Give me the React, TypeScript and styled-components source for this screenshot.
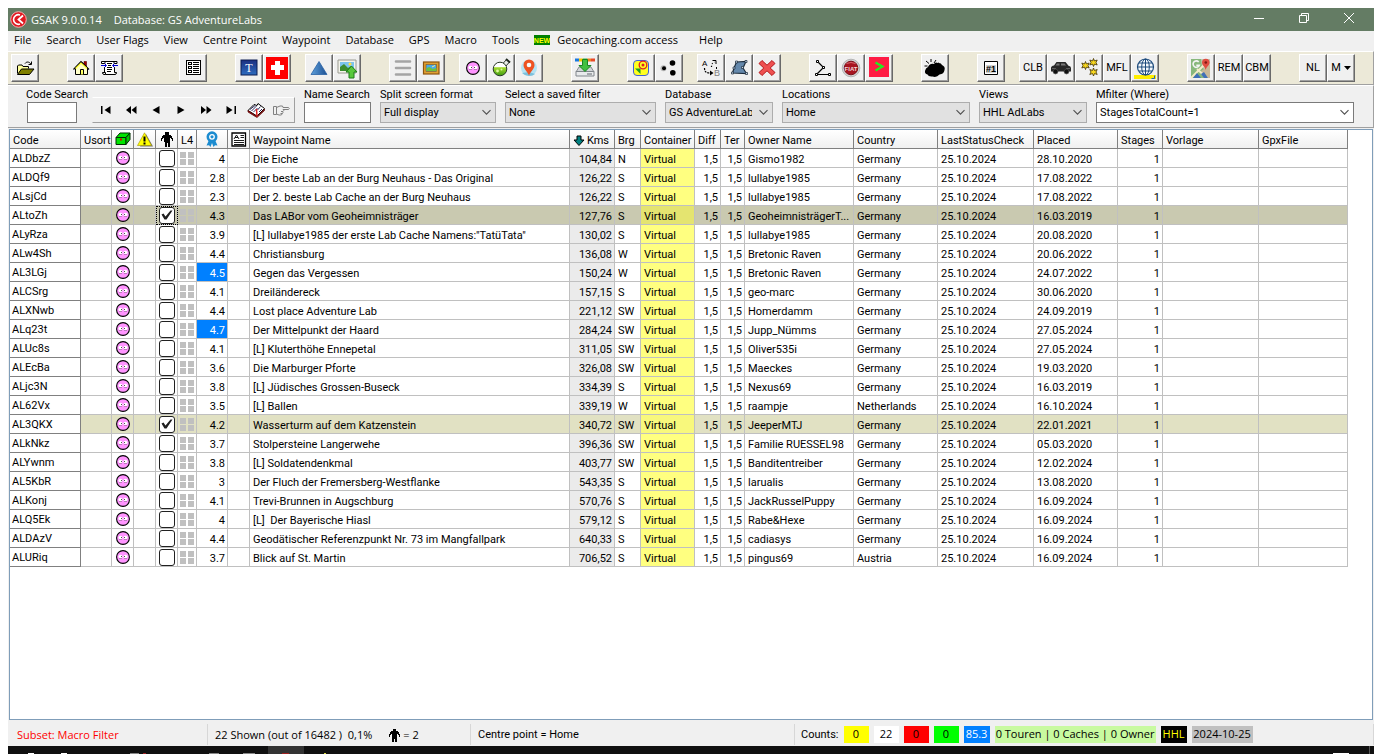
import React from 'react';
import styled, { createGlobalStyle, css } from 'styled-components';

const ui = '"Open Sans", "Noto Sans", sans-serif';
const grid = '"Roboto", "Liberation Sans", sans-serif';

const GlobalStyle = createGlobalStyle`
  * { box-sizing: border-box; }
  body { margin: 0; background: #fff; color: #000; font: 11px/16px ${ui}; }
  button, input, select { font: inherit; color: inherit; margin: 0; }
`;

const Page = styled.div`
  min-height: 100vh;
  padding: 8px 8px 0;
  display: flex;
  flex-direction: column;
`;

const Frame = styled.div`
  flex: 1;
  display: flex;
  flex-direction: column;
  min-width: 0;
  background: #f0f0f0;
`;

/* ---------- title bar and menu ---------- */

const TitleBar = styled.header`
  display: flex;
  align-items: center;
  height: 23px;
  padding-left: 2px;
  background: #647c64;
  color: #fff;
`;

const Title = styled.h1`
  margin: 0 0 0 4px;
  flex: 1;
  display: flex;
  gap: 12px;
  font-size: 11px;
  font-weight: 400;
`;

const CaptionButton = styled.button`
  width: 45px;
  height: 23px;
  padding: 0 0 4px;
  border: 0;
  background: none;
  display: grid;
  place-items: center;
  &:last-child { margin-right: 3px; }
`;

const MenuBar = styled.nav`
  display: flex;
  align-items: center;
  gap: 15px;
  height: 20px;
  padding: 0 6px 2px;
`;

const MenuItem = styled.button<{ $spaced?: boolean }>`
  display: flex;
  align-items: center;
  gap: 7px;
  padding: 0;
  margin-left: ${(p) => (p.$spaced ? '6px' : '0')};
  border: 0;
  background: none;
  white-space: nowrap;
`;

/* ---------- toolbar ---------- */

const Toolbar = styled.div`
  display: flex;
  padding: 2px 3px;
  background: #ece9d8;
  border-top: 1px solid #fff;
  border-bottom: 1px solid #a0a0a0;
  border-right: 1px solid #a0a0a0;
`;

const ToolGroup = styled.div<{ $gap: number }>`
  display: flex;
  margin-left: ${(p) => p.$gap}px;
`;

const ToolButton = styled.button`
  width: 28px;
  height: 28px;
  padding: 0;
  display: grid;
  place-items: center;
  background: #f0f0f0;
  border: 1px solid;
  border-color: #fff #696969 #696969 #fff;
  box-shadow: inset -1px -1px #a0a0a0;
  font: 11px/24px ${grid};
`;

/* ---------- filter panel ---------- */

const FilterPanel = styled.form`
  display: flex;
  align-items: flex-start;
  gap: 9px;
  padding: 2px 19px 4px 18px;
  border-top: 1px solid #fff;
  border-bottom: 1px solid #a0a0a0;
  border-right: 1px solid #a0a0a0;
  font: 11px/14px ${grid};
`;

const Field = styled.div<{ $width?: number }>`
  ${(p) => (p.$width ? css`flex: 0 0 ${p.$width}px;` : css`flex: 1;`)}
  min-width: 0;
  display: flex;
  flex-direction: column;
`;

const Label = styled.label`
  white-space: nowrap;
`;

const TextBox = styled.input<{ $narrow?: boolean }>`
  width: ${(p) => (p.$narrow ? '50px' : '100%')};
  height: 21px;
  margin-left: ${(p) => (p.$narrow ? '1px' : '0')};
  padding: 0 3px;
  border: 1px solid #7a7a7a;
  background: #fff;
`;

const ComboBox = styled.div`
  position: relative;
  svg {
    position: absolute;
    right: 4px;
    top: 7px;
    pointer-events: none;
  }
`;

const Select = styled.select`
  appearance: none;
  display: block;
  width: 100%;
  height: 21px;
  padding: 1px 20px 0 3px;
  border: 1px solid #adadad;
  border-radius: 0;
  background: #e1e1e1;
`;

const Navigator = styled.div`
  flex: 0 0 203px;
  display: flex;
  height: 26px;
  margin-top: 9px;
  border: 1px solid;
  border-color: #fff #a0a0a0 #a0a0a0 #f0f0f0;
`;

const NavButton = styled.button`
  width: 25px;
  padding: 0;
  border: 0;
  background: none;
  display: grid;
  place-items: center;
`;

/* ---------- grid ---------- */

const GridPane = styled.main`
  flex: 1;
  margin: 1px 1px 0;
  border: 1px solid #7f9db9;
  background: #fff;
  overflow: hidden;
`;

const Table = styled.table`
  width: 1338px;
  table-layout: fixed;
  border-collapse: separate;
  border-spacing: 0;
  font: 11px/14px ${grid};
`;

const HeadCell = styled.th<{ $icon?: boolean }>`
  height: 19px;
  padding: ${(p) => (p.$icon ? '0 3px' : '4px 3px 0')};
  border-right: 1px solid #808080;
  border-bottom: 1px solid #808080;
  background: linear-gradient(#fff, #f0f0f0);
  font-weight: 400;
  text-align: left;
  white-space: nowrap;
  svg { display: block; margin: auto; }
`;

const SortHead = styled.span`
  display: flex;
  align-items: center;
  justify-content: space-between;
  padding-right: 2px;
  svg { margin: 0; }
`;

const Cell = styled.td<{ $align?: string }>`
  height: 19px;
  padding: 4px 2px 0 3px;
  border-right: 1px solid #c0c0c0;
  border-bottom: 1px solid #c0c0c0;
  text-align: ${(p) => p.$align ?? 'left'};
  white-space: pre;
  overflow: hidden;
  text-overflow: ellipsis;
`;

const CodeCell = styled(Cell)`
  padding: 3px 2px 1px;
  background: #fff;
  border-color: #808080;
`;

const IconCell = styled(Cell)<{ $focused?: boolean }>`
  padding: 0;
  outline: ${(p) => (p.$focused ? '1px dotted #000' : 'none')};
  outline-offset: -1px;
  svg { display: block; margin: auto; }
`;

const RatingCell = styled(Cell)<{ $top: boolean }>`
  ${(p) => p.$top && css`background: #0080ff; color: #fff;`}
`;

const KmsCell = styled(Cell)<{ $plain: boolean }>`
  background: ${(p) => (p.$plain ? '#ebebeb' : 'transparent')};
`;

const tones = {
  none: { row: '#fff', box: '#ffff80' },
  current: { row: '#c9c9b0', box: '#e4e470' },
  flagged: { row: '#e1e1c3', box: '#f8f87c' },
};

const Row = styled.tr<{ $tone: keyof typeof tones }>`
  background: ${(p) => tones[p.$tone].row};
  ${Cell}.box { background: ${(p) => tones[p.$tone].box}; }
`;

const CheckBox = styled.input`
  appearance: none;
  display: block;
  width: 16px;
  height: 17px;
  margin: 0 auto;
  border: 1px solid #202020;
  border-radius: 3px;
  background: #fff;
  &:checked::before {
    content: '';
    display: block;
    width: 14px;
    height: 15px;
    background: #202020;
    clip-path: polygon(2px 7px, 4px 6px, 6px 9px, 11px 3px, 13px 3px, 7px 12px, 5px 12px);
  }
`;

/* ---------- status bar ---------- */

const StatusBar = styled.footer`
  display: flex;
  height: 26px;
`;

const Panel = styled.div<{ $width?: number }>`
  ${(p) => (p.$width ? css`flex: 0 0 ${p.$width}px;` : css`flex: 1;`)}
  display: flex;
  align-items: center;
  margin: 4px 0 1px;
  padding: 1px 6px 0 7px;
  border-right: 1px solid #d7d7d7;
  white-space: pre;
`;

const FilterName = styled(Panel)`
  padding-left: 9px;
  color: #f00;
`;

const Small = styled.span`
  font: 11px/16px ${grid};
`;

const Counts = styled(Panel)`
  padding: 0 6px;
  gap: 5px;
`;

const Count = styled.span<{ $bg: string; $fg?: string; $width: number }>`
  width: ${(p) => p.$width}px;
  height: 17px;
  line-height: 16px;
  text-align: center;
  background: ${(p) => p.$bg};
  color: ${(p) => p.$fg ?? '#000'};
`;

const TaskStrip = styled.div`
  display: flex;
  justify-content: space-between;
  height: 8px;
  background: #101010;
`;

/* ---------- drawings ---------- */

const Icon = ({ children, crisp, w = 24, h = 24 }: { children: React.ReactNode; crisp?: boolean; w?: number; h?: number }) => (
  <svg width={w} height={h} viewBox={`0 0 ${w} ${h}`} fill="none" shapeRendering={crisp ? 'crispEdges' : 'auto'} aria-hidden="true">
    {children}
  </svg>
);

const FaceShape = () => (
  <>
    <circle cx="7" cy="7" r="6.400" fill="#ff94ff" stroke="#000" strokeWidth="1.100" />
    <ellipse cx="4.500" cy="6.500" rx="2" ry="1.700" fill="#fff" />
    <ellipse cx="9.500" cy="6.500" rx="2" ry="1.700" fill="#fff" />
    <path d="M3 8.500h3M8 8.500h3" stroke="#a070a0" strokeWidth=".7" />
    <path d="M5 6h1v1h-1zM8 6h1v1h-1z" fill="#505050" />
  </>
);

const Face = () => <Icon w={14} h={14}><FaceShape /></Icon>;

const Person = ({ w = 12, h = 15 }: { w?: number; h?: number }) => (
  <svg width={w} height={h} viewBox="0 0 12 15" fill="#000" shapeRendering="crispEdges" aria-hidden="true">
    <path d="M4 0h4v3h-4zM2 3h8v1h1v2h1v3h-1v-2h-1v-1h-1v4h-.5v5h-2v-4h-1v4h-2v-5H3V6H2v1H1v2H0V6h1V4h1z" />
  </svg>
);

const Chevron = () => (
  <svg width="11" height="7" viewBox="0 0 11 7" fill="none" aria-hidden="true">
    <path d="M1.500 1.200l4 4 4-4" stroke="#505050" strokeWidth="1.100" />
  </svg>
);

const icons: Record<string, React.ReactNode> = {
  open: (
    <Icon>
      <path d="M4.500 17.500v-7.500l1-1h3.500l1 1.500h5.500v2" fill="#ffff9c" stroke="#000" />
      <path d="M4.500 18.500l4-5.500h12.500l-4.500 5.500z" fill="#808000" stroke="#000" />
      <path d="M12 7.500c1.500-2 4-2 6 .5M18.500 5.500v3h-3" stroke="#000" />
    </Icon>
  ),
  home: (
    <Icon>
      <path d="M15 5.500h2.500v6h-2.500z" fill="#a00000" stroke="#500" strokeWidth=".6" />
      <path d="M6.500 12v6.500h12v-6.500l-6-6z" fill="#ffffc8" stroke="#000" />
      <path d="M4.500 13.500l7.500-8 8 8" stroke="#000" strokeWidth="1.200" />
      <path d="M6.500 12.500l5.500-5.500 6 5.500" stroke="#ffff30" strokeWidth="1.200" />
      <path d="M11.500 18.500v-5h3v5" fill="#ffff60" stroke="#000" />
    </Icon>
  ),
  scroll: (
    <Icon>
      <path d="M7.500 5.500h10v13h-10z" fill="#fff" />
      <path d="M8 5.500h9M7.500 11v5.500M17.500 11v5.500M5.500 16.500h3v2h-1.500q-1.500 0-1.500-2zM8.500 18.500h9.500q1.500 0 1.500-2h-2" stroke="#000" />
      <path d="M4.500 5.500h3.500v2h-3.500zM17 5.500h3v2h-3z" fill="#fff" stroke="#000" />
      <path d="M10 7.500h5M11 9.500h3M10 11.500h5M10 13.500h5M10 15.500h4" stroke="#000" />
      <path d="M4 9.500h5M7.500 7.500l2 2-2 2M21 9.500h-5M17.500 7.500l-2 2 2 2" stroke="#0000d0" />
    </Icon>
  ),
  list: (
    <Icon crisp>
      <path d="M5.500 4.500h14v14h-14z" fill="#fff" stroke="#000" />
      <path d="M7.500 6.500h3v2h-3zM7.500 10.500h3v2h-3zM7.500 14.500h3v2h-3z" fill="#fff" stroke="#000" />
      <path d="M12 6.500h6M12 8.500h6M12 10.500h6M12 12.500h6M12 14.500h6M12 16.500h6" stroke="#000" />
    </Icon>
  ),
  tee: (
    <Icon>
      <defs><linearGradient id="tee" x2="0" y2="1"><stop stopColor="#1c2f80" /><stop offset="1" stopColor="#2d6cc0" /></linearGradient></defs>
      <rect x="4" y="4" width="16" height="15" fill="url(#tee)" stroke="#0c1c50" />
      <text x="12" y="16" fill="#fff" fontSize="12" fontFamily="Liberation Serif, serif" textAnchor="middle">T</text>
    </Icon>
  ),
  swiss: (
    <Icon crisp>
      <path d="M1 1h22v22h-22z" fill="#f00" />
      <path d="M10 5h5v4h4v5h-4v5h-5v-5h-4v-5h4z" fill="#fff" />
    </Icon>
  ),
  triangle: (
    <Icon>
      <defs><linearGradient id="tri" x2="1"><stop stopColor="#5da0dc" /><stop offset="1" stopColor="#1c4f92" /></linearGradient></defs>
      <path d="M12 5.500l8 13h-16z" fill="url(#tri)" stroke="#2a62a4" strokeWidth=".8" />
    </Icon>
  ),
  photo: (
    <Icon>
      <path d="M3 4h18v13h-18z" fill="#f4f4ec" stroke="#9a9a90" />
      <path d="M5 6h14v9h-14z" fill="#7cc4ee" />
      <path d="M5 15v-4l4-3 4 4 3-2 3 3v2z" fill="#3c8c30" />
      <circle cx="15" cy="8" r="1.500" fill="#ffe040" />
      <path d="M16.500 10l5.500 6h-3v6h-5v-6h-3z" fill="#58c83c" stroke="#1e7c18" />
    </Icon>
  ),
  bars: (
    <Icon>
      <path d="M5 5.500h14M5 12h14M5 18.500h14" stroke="#a4a4a4" strokeWidth="2.600" strokeLinecap="round" />
    </Icon>
  ),
  frame: (
    <Icon>
      <rect x="4.500" y="6" width="15.500" height="12" fill="#e0a030" stroke="#8c5410" strokeWidth="1.200" />
      <rect x="7" y="8.500" width="10.500" height="7" fill="#48a8e8" stroke="#8c5410" strokeWidth=".6" />
      <path d="M7.500 15v-3l3-1 3 2 4-1v3z" fill="#6cc040" />
      <path d="M13 11l3-1.500" stroke="#fff080" />
    </Icon>
  ),
  face: <Icon><g transform="translate(5 5)"><FaceShape /></g></Icon>,
  flask: (
    <Icon>
      <defs><linearGradient id="flask" x2="0" y2="1"><stop stopColor="#fff" /><stop offset=".35" stopColor="#fff" /><stop offset=".4" stopColor="#a4dc30" /><stop offset="1" stopColor="#3c9810" /></linearGradient></defs>
      <path d="M13.500 8l4-4.500 3 2.500-4 4.500z" fill="#e8ece8" stroke="#303830" />
      <path d="M17 3l4 3.500" stroke="#202820" strokeWidth="2" />
      <circle cx="11" cy="13" r="6.800" fill="url(#flask)" stroke="#283828" />
      <circle cx="8.500" cy="15" r="1.400" fill="#e0f8a0" /><circle cx="12.500" cy="13.500" r="1" fill="#e0f8a0" />
    </Icon>
  ),
  pin: (
    <Icon>
      <circle cx="12" cy="12" r="8" fill="#b4e2f4" />
      <path d="M5 17q3 3 7 3t6-2l-6-2z" fill="#7cc0dc" />
      <path d="M12 19.500c-1.500-4-5.500-6.500-5.500-10.500a5.500 5.500 0 0 1 11 0c0 4-4 6.500-5.500 10.500z" fill="#ee5222" />
      <circle cx="12" cy="9" r="2.300" fill="#f8f8f8" />
    </Icon>
  ),
  drive: (
    <Icon>
      <path d="M2 2.500h4v3h-4z" fill="#1878e0" /><path d="M6 2.500h4v3h-4z" fill="#f4c800" />
      <path d="M10 2.500h4v3h-4z" fill="#28b848" /><path d="M14 2.500h4v3h-4z" fill="#f08020" /><path d="M18 2.500h4v3h-4z" fill="#e84828" />
      <path d="M6 11h12l3 5h-18z" fill="#d0d4d8" stroke="#888c90" />
      <path d="M3 15.500h18v4.500h-18z" fill="#e8eaec" stroke="#80868c" />
      <path d="M14 18h5" stroke="#60666c" />
      <path d="M9.500 3.500h5v6h3.500l-6 6-6-6h3.500z" fill="#40c040" stroke="#188420" />
    </Icon>
  ),
  target: (
    <Icon>
      <rect x="4.500" y="4.500" width="15" height="15" rx="3.500" fill="#ffff20" stroke="#4060d8" />
      <circle cx="14" cy="9" r="3.800" fill="#ffff20" stroke="#e02020" strokeWidth="1.300" />
      <circle cx="14" cy="9" r="1.500" fill="#e02020" />
      <path d="M6 12.500h5.500v5.500z" fill="#20a020" />
    </Icon>
  ),
  dots: (
    <Icon>
      <circle cx="6.500" cy="12.300" r="3" fill="#b8b8b8" />
      <circle cx="15.500" cy="7" r="2.800" fill="#000" /><circle cx="7" cy="12.300" r="2" fill="#000" /><circle cx="15.800" cy="16.700" r="2.800" fill="#000" />
    </Icon>
  ),
  route: (
    <Icon>
      <text x="3" y="10" fill="#000" fontSize="8" fontFamily="Liberation Sans, sans-serif">A</text>
      <text x="15" y="20" fill="#808080" fontSize="9" fontFamily="Liberation Sans, sans-serif">B</text>
      <path d="M5.500 12c0 4 2 5 5.500 5" stroke="#000" strokeDasharray="2 1" strokeWidth="1.200" /><path d="M11 14.500l3.500 2.500-3.500 2.500z" fill="#000" />
      <path d="M12.500 11c0-3 1-4 3-5" stroke="#000" strokeDasharray="1 2" strokeWidth="1.200" /><path d="M13.500 4.500h3.500v3.500M17.500 11v2" stroke="#000" />
    </Icon>
  ),
  polygon: (
    <Icon>
      <path d="M9.500 6l9.500-.5-3 6.500 3.500 5.500-14-.5 1.500-5z" fill="#6488ac" stroke="#1c2c3c" strokeWidth="1.200" />
      <path d="M8.500 5h2v2h-2zM18 4.500h2v2h-2zM14.500 10.500h2v2h-2zM18.500 16.500h2v2h-2zM4.500 16h2v2h-2zM6 11h2v2h-2z" fill="#c8d8e8" stroke="#1c2c3c" strokeWidth=".7" />
    </Icon>
  ),
  cross: (
    <Icon>
      <path d="M7 4.500l5 4.700 5-4.700 3 3-4.800 4.500 4.800 4.500-3 3-5-4.700-5 4.700-3-3 4.800-4.500-4.800-4.500z" fill="#ee5050" stroke="#b41418" strokeLinejoin="round" />
    </Icon>
  ),
  track: (
    <Icon>
      <path d="M6.500 5.500l6 6-7 7h13" stroke="#000" strokeWidth="1.200" />
      <path d="M5.500 4.500h2v2h-2zM11.500 10.500h2v2h-2zM4.500 17.500h2v2h-2zM17.500 17.500h2v2h-2z" fill="#fff" stroke="#000" />
    </Icon>
  ),
  fiat: (
    <Icon>
      <circle cx="12" cy="12" r="8.800" fill="#d4d4d4" stroke="#b4b4b4" />
      <circle cx="12" cy="12" r="6.800" fill="#a81420" stroke="#78101a" />
      <path d="M7.500 7.500q4.500-2 9 0" stroke="#d86870" />
      <text x="12" y="14.500" fill="#f0d8d8" fontSize="6" fontWeight="700" fontFamily="Liberation Sans, sans-serif" textAnchor="middle">FIAT</text>
    </Icon>
  ),
  prompt: (
    <Icon>
      <path d="M2 1h20v20h-20z" fill="#ff1c44" />
      <path d="M8.500 6.500l7 4-7 4" stroke="#20f020" strokeWidth="2.200" />
    </Icon>
  ),
  weather: (
    <Icon>
      <path d="M8 3v3M3 5l3 2.500M1.500 10h3M13 4l-2 3M16 7l-3 1" stroke="#000" />
      <path d="M5 11q2-4 6-3 1-2.500 4-1 3-.5 4 2 3.500 1.500 2.500 5-.5 4-5 4.500-3 3.500-7 2-4 .5-5-2-3-1-2.500-3.500.500-3 3-4z" fill="#000" />
    </Icon>
  ),
  number: (
    <Icon>
      <path d="M5.500 5.500h13v13h-13z" fill="#fff" stroke="#000" /><path d="M7 9h10v8h-10z" fill="#d0d0d0" />
      <text x="12" y="16" fill="#000" fontSize="9" fontWeight="700" fontFamily="Liberation Sans, sans-serif" textAnchor="middle">#1</text>
    </Icon>
  ),
  car: (
    <Icon>
      <path d="M2 12q0-2 3-2.500l2.500-3.500h9l3 3.700q2.500.3 2.500 2.300v3.500h-20z" fill="#282828" />
      <path d="M8 7.500h2.500v2h-4zM12 7.500h3.500l1.500 2h-5z" fill="#787878" />
      <path d="M3 12.500h4M17 12.500h4" stroke="#606060" />
      <circle cx="6.500" cy="15.500" r="2.400" fill="#101010" stroke="#484848" strokeWidth=".8" /><circle cx="17.500" cy="15.500" r="2.400" fill="#101010" stroke="#484848" strokeWidth=".8" />
    </Icon>
  ),
  stars: (
    <Icon>
      {[[8.500, 9.500], [16.500, 6.500], [16.500, 16]].map(([x, y]) => (
        <path key={`${x}${y}`} transform={`translate(${x} ${y})`} d="M0-4l1 2.500 2.700-1-1.200 2.500 1.200 2.500-2.700-1-1 2.500-1-2.500-2.700 1 1.200-2.500-1.200-2.500 2.700 1z" fill="#f8d820" stroke="#403000" strokeWidth=".8" />
      ))}
    </Icon>
  ),
  globe: (
    <Icon>
      <path d="M1 19h22v4h-22z" fill="#ffee00" /><path d="M18.500 22.500h3v-3" stroke="#2060c0" />
      <circle cx="12.500" cy="11" r="8" fill="#f4f8fc" stroke="#1c4a7c" strokeWidth="1.200" />
      <ellipse cx="12.500" cy="11" rx="3.800" ry="8" stroke="#1c4a7c" />
      <path d="M12.500 3v16M4.500 11h16M6 7h13M6 15h13" stroke="#1c4a7c" />
    </Icon>
  ),
  maps: (
    <Icon>
      <path d="M2 3h19v19h-19z" fill="#88b87c" />
      <path d="M12 3h9v16l-8-8z" fill="#c4c8b4" />
      <path d="M21 9v13h-5l-4-7z" fill="#c8b898" />
      <path d="M2 22l17-17M8 13l10 9" stroke="#f4ecc8" strokeWidth="2" />
      <path d="M4 22l4-5 4 5zM15 22l-3-4 3-2 4 6z" fill="#4070b8" />
      <path d="M9.700 6a3.200 3.200 0 1 0 .6 3.200h-3" stroke="#f4f4f4" strokeWidth="1.600" />
      <path d="M16.500 14c0-3-3.500-4.500-3.500-7.500a3.800 3.800 0 0 1 7.600 0c0 3-3.500 4.500-4.100 7.500z" fill="#e04c40" /><circle cx="16.800" cy="6.500" r="1.300" fill="#801810" />
    </Icon>
  ),
};

/* Tools with a gap in front, in button order; an entry without an icon is a caption button. */
const tools: { gap: number; items: [string, string][] }[] = [
  { gap: 0, items: [['Open', 'open']] },
  { gap: 28, items: [['Home', 'home'], ['Notes', 'scroll']] },
  { gap: 56, items: [['List', 'list']] },
  { gap: 28, items: [['T', 'tee'], ['Swiss', 'swiss']] },
  { gap: 14, items: [['Triangle', 'triangle'], ['Images', 'photo']] },
  { gap: 28, items: [['Lines', 'bars'], ['Picture', 'frame']] },
  { gap: 14, items: [['Labs', 'face'], ['Flask', 'flask'], ['Location', 'pin']] },
  { gap: 28, items: [['Download', 'drive']] },
  { gap: 28, items: [['Target', 'target'], ['Share', 'dots']] },
  { gap: 14, items: [['Route', 'route'], ['Polygon', 'polygon'], ['Delete', 'cross']] },
  { gap: 28, items: [['Track', 'track'], ['Fiat', 'fiat'], ['Run', 'prompt']] },
  { gap: 28, items: [['Weather', 'weather']] },
  { gap: 28, items: [['First', 'number']] },
  { gap: 14, items: [['CLB', ''], ['Car', 'car'], ['Stars', 'stars'], ['MFL', ''], ['Web', 'globe']] },
  { gap: 28, items: [['Maps', 'maps'], ['REM', ''], ['CBM', '']] },
  { gap: 28, items: [['NL', ''], ['M', 'menu']] },
];

const MenuCaption = styled.span`
  display: flex;
  align-items: center;
  gap: 3px;
`;

const toolFace = (label: string, icon: string) => {
  if (icon === 'menu') {
    return <MenuCaption>M<Icon w={7} h={4}><path d="M0 0h7l-3.500 4z" fill="#000" /></Icon></MenuCaption>;
  }
  return icon ? icons[icon] : label;
};

const navIcons: [string, React.ReactNode][] = [
  ['First', <path key="p" d="M7 4h1.500v8h-1.500zM16.500 4v8l-6-4z" fill="#000" />],
  ['Page back', <path key="p" d="M12 4v8l-5-4zM17.500 4v8l-5-4z" fill="#000" />],
  ['Previous', <path key="p" d="M15.500 4v8l-7-4z" fill="#000" />],
  ['Next', <path key="p" d="M8.500 4v8l7-4z" fill="#000" />],
  ['Page forward', <path key="p" d="M7 4v8l5-4zM12.500 4v8l5-4z" fill="#000" />],
  ['Last', <path key="p" d="M7.500 4v8l6-4zM15.500 4h1.500v8h-1.500z" fill="#000" />],
  ['Bookmark', (
    <g key="g">
      <path d="M4 8.500l6-6 3 1 1-2 6.500 5-7.500 7.500z" fill="#fff" stroke="#000" />
      <path d="M6 7.500l5-4M7.500 9l5-5M9.500 10l4-4M15 10l3-3M13.500 8l3-3.500" stroke="#303060" />
      <path d="M4 8.500l9 6 7.500-7.500v1.500l-7.500 7-9-5.500z" fill="#a01010" stroke="#500000" strokeWidth=".7" />
      <path d="M12.500 7l.5 7.500" stroke="#e02020" strokeWidth="1.500" />
    </g>
  )],
  ['Go to', <path key="p" d="M4.500 4.500h3v8h-3zM7.500 5.500l3.500-1.500h2.500l.5 1.500h5.500q1.500 1 0 2h-5.500M14 7.500q1.500 1 0 2h-2M13.500 9.500q1 1 0 2h-2M13 11.500q0 1.500-1 1.500h-2l-2.500-1" stroke="#808080" />],
];

const WarningSign = () => (
  <Icon w={16} h={15}>
    <path d="M9 2l7 12.500h-13z" fill="#707070" />
    <path d="M7.500.8l7 12.700h-14z" fill="#ffff00" stroke="#a09000" strokeWidth=".6" />
    <path d="M6.500 4.500h2v5h-2zM6.500 10.500h2v2h-2z" fill="#000" />
  </Icon>
);

const Cube = () => (
  <Icon w={16} h={14}>
    <path d="M1 5.500l4-4.500h10l-4 4.500zM1 5.500h10v7h-10z" fill="#00e400" stroke="#002c00" />
    <path d="M11 5.500l4-4.500v6.500l-4 5z" fill="#00c800" stroke="#002c00" />
    <path d="M5 6.500h2v2h-2z" fill="#e00000" />
  </Icon>
);

const Ribbon = () => (
  <Icon w={14} h={16}>
    <path d="M4 9l-2.500 5.500 2.500-.3 1.500 1.800 1.500-4 1.500 4 1.500-1.800 2.500.3-2.500-5.500z" fill="#1c8cd0" />
    <circle cx="7" cy="5.800" r="4.200" fill="#fff" stroke="#1c8cd0" strokeWidth="2.600" />
    <circle cx="7" cy="5.800" r="1.600" fill="#1c8cd0" />
  </Icon>
);

const Doc = () => (
  <Icon w={16} h={15}>
    <path d="M1 1h13.500v13h-13.500z" fill="#fff" stroke="#000" strokeWidth="1.300" />
    <path d="M3 7l2.500-4 2.500 4M4 5.500h3M9.500 3.500h3.500M9.500 5.500h3.500M3 8.500h10M3 10.500h10M3 12.500h10" stroke="#000" strokeWidth=".9" />
  </Icon>
);

const SortArrow = () => (
  <Icon w={12} h={12}><path d="M4 1h4v4h3l-5 5.500-5-5.500h3z" fill="#008080" stroke="#000" /></Icon>
);

const Quad = () => (
  <Icon w={14} h={13} crisp><path d="M0 0h6v6h-6zM8 0h6v6h-6zM0 7h6v6h-6zM8 7h6v6h-6z" fill="#c0c0c0" /></Icon>
);

/* ---------- data ---------- */

const columns = [71, 31, 22, 22, 22, 19, 31, 22, 320, 45, 26, 54, 26, 24, 109, 84, 96, 84, 45, 96, 89];

const caches = `ALDbzZ|4|Die Eiche|104,84|N|Gismo1982|Germany|28.10.2020
ALDQf9|2.8|Der beste Lab an der Burg Neuhaus - Das Original|126,22|S|lullabye1985|Germany|17.08.2022
ALsjCd|2.3|Der 2. beste Lab Cache an der Burg Neuhaus|126,22|S|lullabye1985|Germany|17.08.2022
ALtoZh|4.3|Das LABor vom Geoheimnisträger|127,76|S|GeoheimnisträgerT...|Germany|16.03.2019
ALyRza|3.9|[L] lullabye1985 der erste Lab Cache Namens:"TatüTata"|130,02|S|lullabye1985|Germany|20.08.2020
ALw4Sh|4.4|Christiansburg|136,08|W|Bretonic Raven|Germany|20.06.2022
AL3LGj|4.5|Gegen das Vergessen|150,24|W|Bretonic Raven|Germany|24.07.2022
ALCSrg|4.1|Dreiländereck|157,15|S|geo-marc|Germany|30.06.2020
ALXNwb|4.4|Lost place Adventure Lab|221,12|SW|Homerdamm|Germany|24.09.2019
ALq23t|4.7|Der Mittelpunkt der Haard|284,24|SW|Jupp_Nümms|Germany|27.05.2024
ALUc8s|4.1|[L] Kluterthöhe Ennepetal|311,05|SW|Oliver535i|Germany|27.05.2024
ALEcBa|3.6|Die Marburger Pforte|326,08|SW|Maeckes|Germany|19.03.2020
ALjc3N|3.8|[L] Jüdisches Grossen-Buseck|334,39|S|Nexus69|Germany|16.03.2019
AL62Vx|3.5|[L] Ballen|339,19|W|raampje|Netherlands|16.10.2024
AL3QKX|4.2|Wasserturm auf dem Katzenstein|340,72|SW|JeeperMTJ|Germany|22.01.2021
ALkNkz|3.7|Stolpersteine Langerwehe|396,36|SW|Familie RUESSEL98|Germany|05.03.2020
ALYwnm|3.8|[L] Soldatendenkmal|403,77|SW|Banditentreiber|Germany|12.02.2024
AL5KbR|3|Der Fluch der Fremersberg-Westflanke|543,35|S|larualis|Germany|13.08.2020
ALKonj|4.1|Trevi-Brunnen in Augschburg|570,76|S|JackRusselPuppy|Germany|16.09.2024
ALQ5Ek|4|[L]  Der Bayerische Hiasl|579,12|S|Rabe&Hexe|Germany|16.09.2024
ALDAzV|4.4|Geodätischer Referenzpunkt Nr. 73 im Mangfallpark|640,33|S|cadiasys|Germany|16.09.2024
ALURiq|3.7|Blick auf St. Martin|706,52|S|pingus69|Austria|16.09.2024`
  .split('\n')
  .map((line) => line.split('|'));

const toneOf = (code: string): keyof typeof tones =>
  code === 'ALtoZh' ? 'current' : code === 'AL3QKX' ? 'flagged' : 'none';

const combos: [string, string, number][] = [
  ['Split screen format', 'Full display', 116],
  ['Select a saved filter', 'None', 151],
  ['Database', 'GS AdventureLabs', 108],
  ['Locations', 'Home', 188],
  ['Views', 'HHL AdLabs', 108],
];

const CacheRow = ({ data }: { data: string[] }) => {
  const [code, rating, name, kms, bearing, owner, country, placed] = data;
  const tone = toneOf(code);
  return (
    <Row $tone={tone}>
      <CodeCell>{code}</CodeCell>
      <Cell />
      <IconCell><Face /></IconCell>
      <Cell />
      <IconCell $focused={tone === 'current'}>
        <CheckBox type="checkbox" aria-label={`Flag ${code}`} defaultChecked={tone !== 'none'} />
      </IconCell>
      <IconCell><Quad /></IconCell>
      <RatingCell $align="right" $top={Number(rating) >= 4.5}>{rating}</RatingCell>
      <Cell />
      <Cell>{name}</Cell>
      <KmsCell $align="right" $plain={tone === 'none'}>{kms}</KmsCell>
      <Cell>{bearing}</Cell>
      <Cell className="box">Virtual</Cell>
      <Cell $align="right">1,5</Cell>
      <Cell $align="right">1,5</Cell>
      <Cell>{owner}</Cell>
      <Cell>{country}</Cell>
      <Cell>25.10.2024</Cell>
      <Cell>{placed}</Cell>
      <Cell $align="right">1</Cell>
      <Cell />
      <Cell />
    </Row>
  );
};

export default function App() {
  return (
    <Page>
      <GlobalStyle />
      <Frame>
        <TitleBar>
          <Icon w={17} h={17}>
            <circle cx="8.500" cy="8.500" r="7.800" fill="#e01820" stroke="#f4b0b0" />
            <path d="M10 4a4.800 4.800 0 1 0 0 9" stroke="#fff" strokeWidth="1.600" />
            <path d="M13 4.500l-4.500 4 4.500 4" stroke="#fff" strokeWidth="1.800" />
          </Icon>
          <Title><span>GSAK 9.0.0.14</span><span>Database: GS AdventureLabs</span></Title>
          <CaptionButton aria-label="Minimize"><Icon w={12} h={12}><path d="M1 6.500h10" stroke="#fff" /></Icon></CaptionButton>
          <CaptionButton aria-label="Restore"><Icon w={12} h={12}><path d="M1.500 3.500h7v7h-7zM3.500 3.500v-2h7v7h-2" stroke="#fff" /></Icon></CaptionButton>
          <CaptionButton aria-label="Close"><Icon w={12} h={12}><path d="M1 1l10 10M11 1l-10 10" stroke="#fff" /></Icon></CaptionButton>
        </TitleBar>

        <MenuBar>
          {['File', 'Search', 'User Flags', 'View', 'Centre Point', 'Waypoint', 'Database', 'GPS', 'Macro', 'Tools'].map((m) => (
            <MenuItem key={m}>{m}</MenuItem>
          ))}
          <MenuItem>
            <svg width="16" height="10" viewBox="0 0 16 10" aria-hidden="true">
              <path d="M0 0h16v10h-16z" fill="#008000" />
              <text x="8" y="8" fill="#ffff00" fontSize="7" fontWeight="700" fontFamily="Liberation Sans, sans-serif" textAnchor="middle">NEW</text>
            </svg>
            Geocaching.com access
          </MenuItem>
          <MenuItem $spaced>Help</MenuItem>
        </MenuBar>

        <Toolbar>
          {tools.map((group) => (
            <ToolGroup key={group.items[0][0]} $gap={group.gap}>
              {group.items.map(([label, icon]) => (
                <ToolButton key={label} type="button" aria-label={label}>{toolFace(label, icon)}</ToolButton>
              ))}
            </ToolGroup>
          ))}
        </Toolbar>

        <FilterPanel>
          <Field $width={57}>
            <Label htmlFor="code">Code Search</Label>
            <TextBox id="code" $narrow />
          </Field>
          <Navigator>
            {navIcons.map(([label, drawing]) => (
              <NavButton key={label} type="button" aria-label={label}><Icon w={24} h={16}>{drawing}</Icon></NavButton>
            ))}
          </Navigator>
          <Field $width={67}>
            <Label htmlFor="name">Name Search</Label>
            <TextBox id="name" />
          </Field>
          {combos.map(([label, value, width]) => (
            <Field key={label} $width={width}>
              <Label htmlFor={label}>{label}</Label>
              <ComboBox><Select id={label}><option>{value}</option></Select><Chevron /></ComboBox>
            </Field>
          ))}
          <Field>
            <Label htmlFor="mfilter">Mfilter (Where)</Label>
            <ComboBox><TextBox id="mfilter" defaultValue="StagesTotalCount=1" /><Chevron /></ComboBox>
          </Field>
        </FilterPanel>

        <GridPane>
          <Table>
            <colgroup>{columns.map((w, i) => <col key={i} width={w} />)}</colgroup>
            <thead>
              <tr>
                <HeadCell>Code</HeadCell>
                <HeadCell>Usort</HeadCell>
                <HeadCell $icon><Cube /></HeadCell>
                <HeadCell $icon><WarningSign /></HeadCell>
                <HeadCell $icon><Person /></HeadCell>
                <HeadCell>L4</HeadCell>
                <HeadCell $icon><Ribbon /></HeadCell>
                <HeadCell $icon><Doc /></HeadCell>
                <HeadCell>Waypoint Name</HeadCell>
                <HeadCell><SortHead><SortArrow />Kms</SortHead></HeadCell>
                <HeadCell>Brg</HeadCell>
                <HeadCell>Container</HeadCell>
                <HeadCell>Diff</HeadCell>
                <HeadCell>Ter</HeadCell>
                {['Owner Name', 'Country', 'LastStatusCheck', 'Placed', 'Stages', 'Vorlage', 'GpxFile'].map((h) => (
                  <HeadCell key={h}>{h}</HeadCell>
                ))}
              </tr>
            </thead>
            <tbody>{caches.map((c) => <CacheRow key={c[0]} data={c} />)}</tbody>
          </Table>
        </GridPane>

        <StatusBar>
          <FilterName $width={200}>Subset: Macro Filter</FilterName>
          <Panel $width={263}>{'22 Shown (out of 16482 )  0,1%      '}<Person w={11} h={15} />{' = 2'}</Panel>
          <Panel $width={324}><Small>Centre point = Home</Small></Panel>
          <Counts>
            <Small>Counts:</Small>
            <Count $width={25} $bg="#ffff00">0</Count>
            <Count $width={25} $bg="#fff">22</Count>
            <Count $width={25} $bg="#ff0000">0</Count>
            <Count $width={25} $bg="#00ff00">0</Count>
            <Count $width={26} $bg="#0080ff" $fg="#fff">85.3</Count>
            <Count $width={161} $bg="#c8faa0">0 Touren | 0 Caches | 0 Owner</Count>
            <Count $width={26} $bg="#000" $fg="#ffff00">HHL</Count>
            <Count $width={61} $bg="#c0c0c0">2024-10-25</Count>
          </Counts>
        </StatusBar>
      </Frame>
      <TaskStrip>
        <Icon w={340} h={8}>
          <path d="M260 0h36v8h-36z" fill="#333" />
          <path d="M20 7h6v1h-6zM53 7h6v1h-6z" fill="#fff" />
          <path d="M122 7h9v1h-9zM201 7h10v1h-10zM235 7h12v1h-12z" fill="#888" />
          <path d="M135 7h3v1h-3zM274 7h7v1h-7z" fill="#a02020" />
          <path d="M316 7h2v1h-2z" fill="#e0e040" />
        </Icon>
        <Icon w={45} h={8}><path d="M4 7h16v1h-16z" fill="#fff" /><path d="M40 0h1v8h-1z" fill="#555" /></Icon>
      </TaskStrip>
    </Page>
  );
}
